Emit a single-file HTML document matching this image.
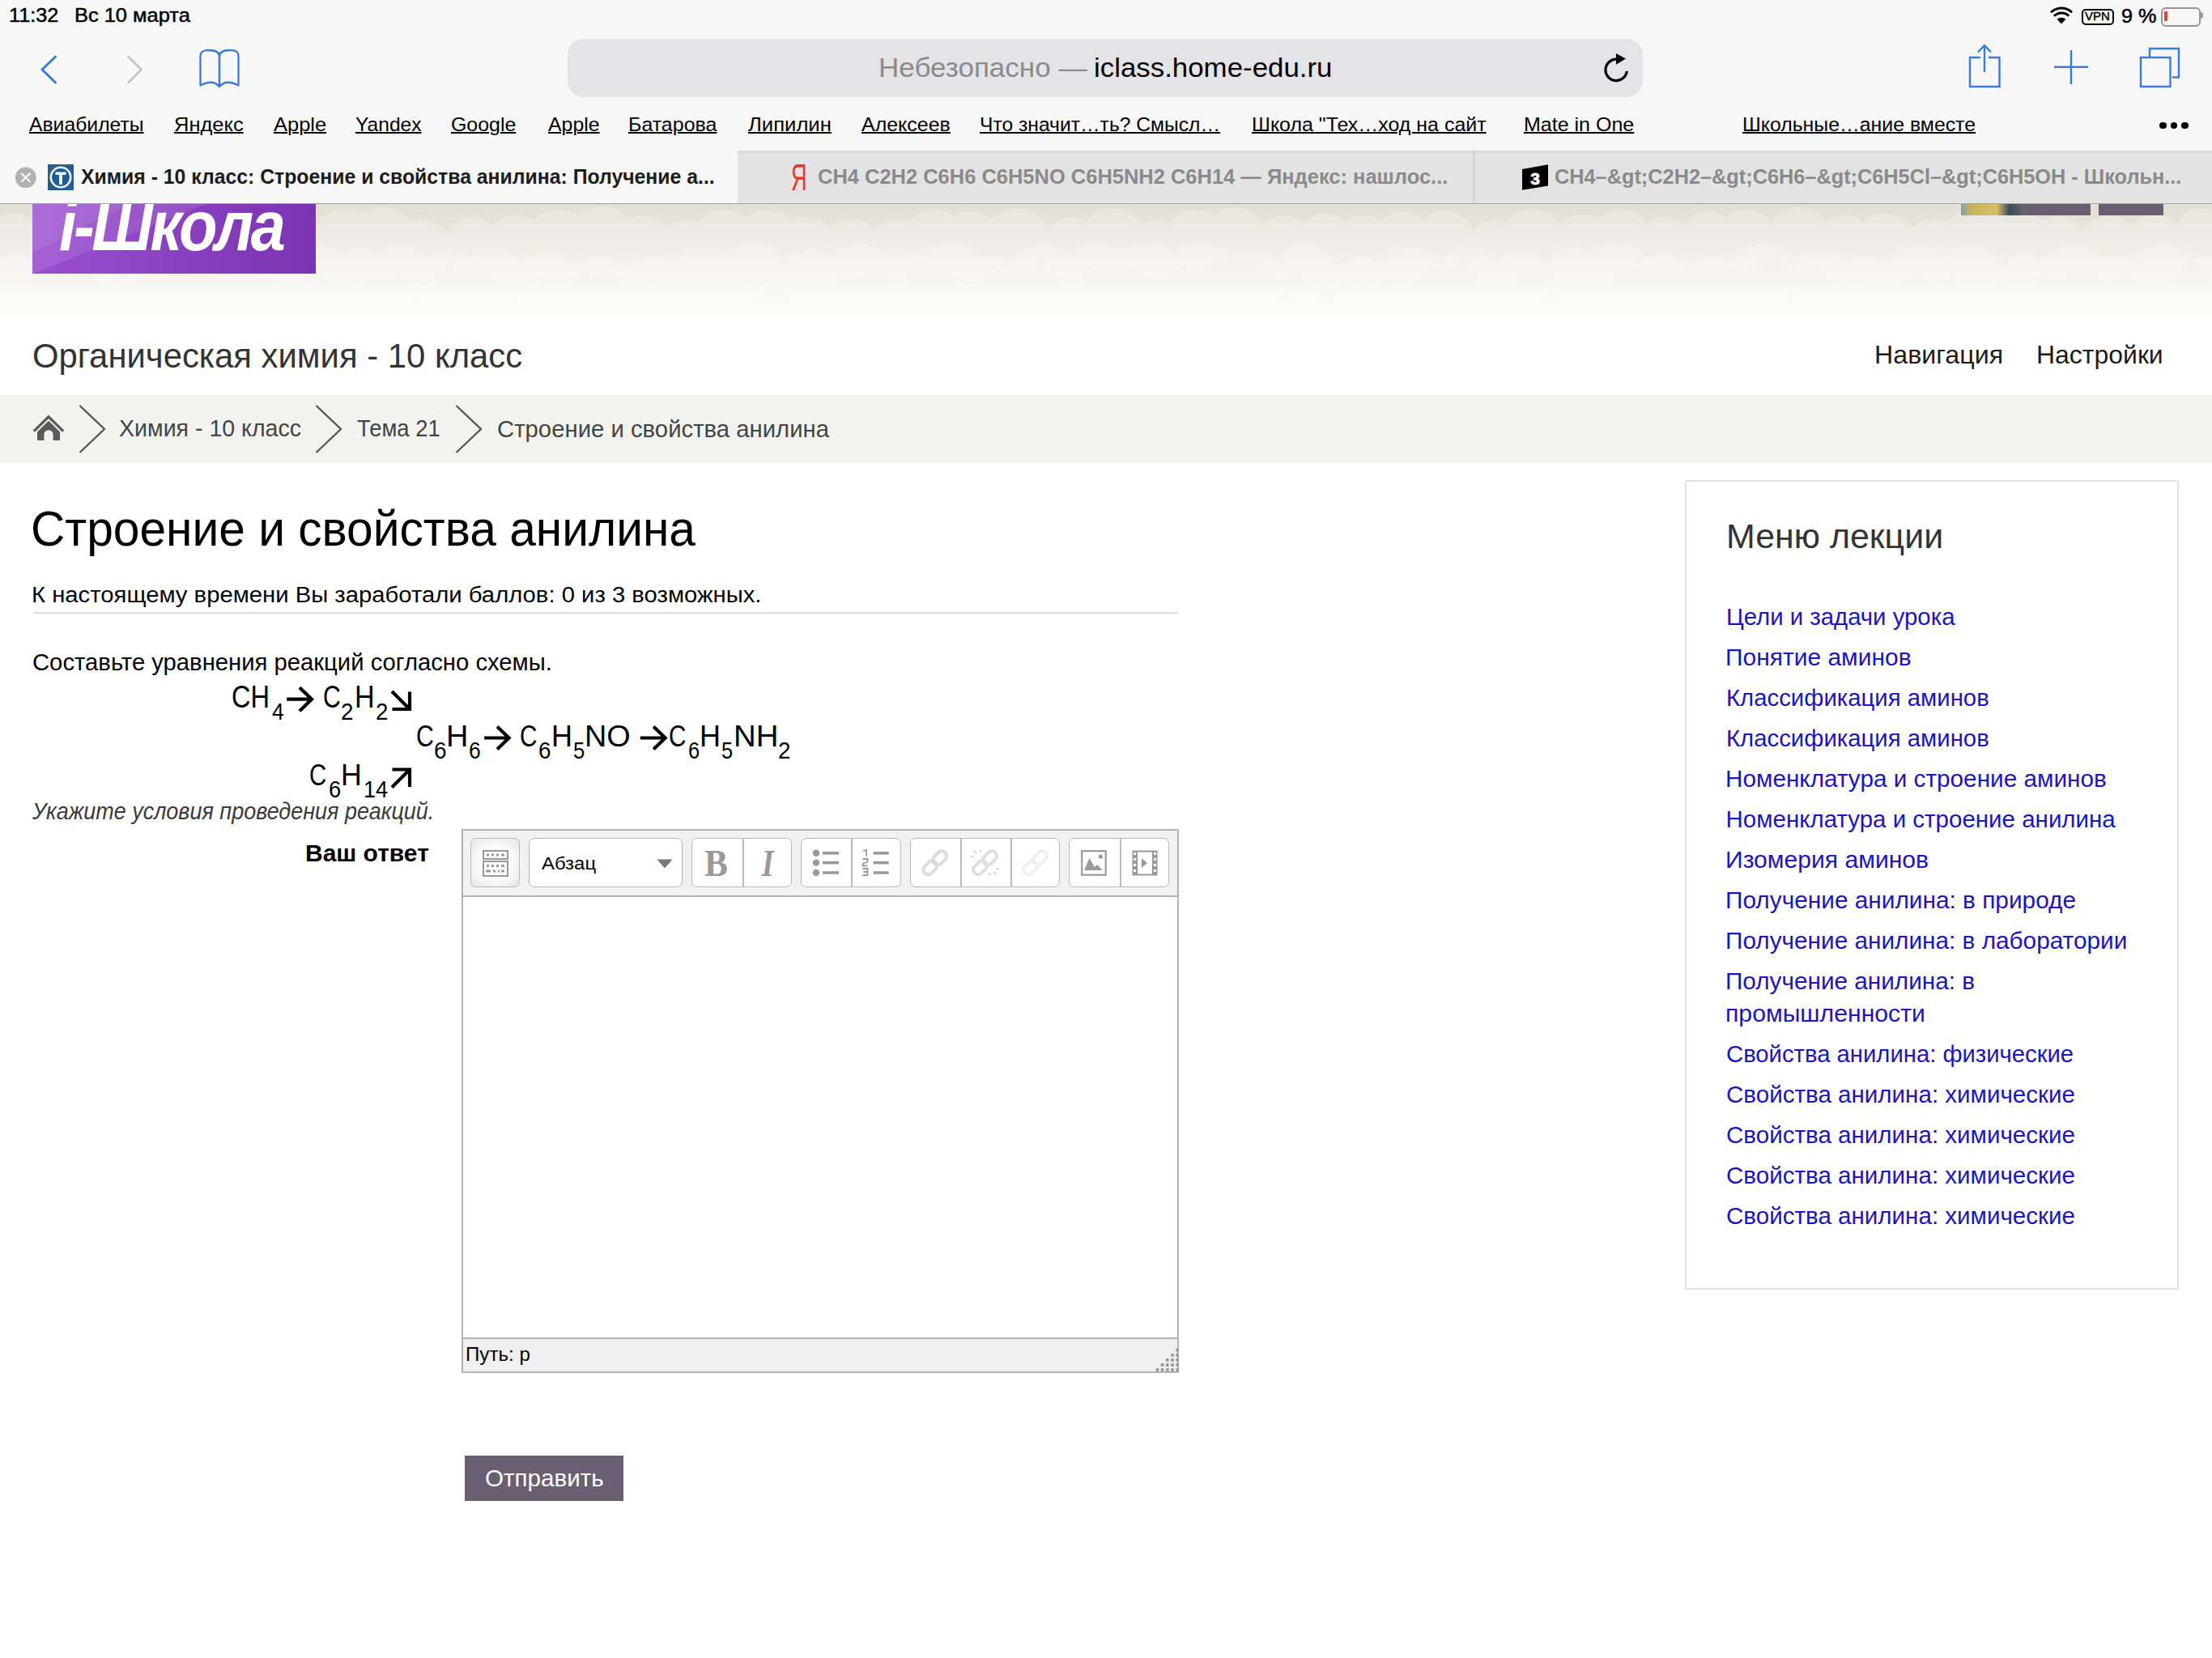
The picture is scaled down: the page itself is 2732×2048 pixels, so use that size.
<!DOCTYPE html><html><head><meta charset="utf-8"><style>
html,body{margin:0;padding:0}
body{width:2732px;height:2048px;position:relative;overflow:hidden;background:#fff;font-family:"Liberation Sans",sans-serif}
.a{position:absolute}
.t{position:absolute;white-space:pre;transform-origin:0 0}
svg{position:absolute;overflow:visible}
</style></head><body>
<div class="a" style="left:0;top:0;width:2732px;height:252px;background:#f7f7f7"></div>
<div class="a" style="left:911px;top:186px;width:1821px;height:65px;background:#e3e3e3"></div>
<div class="a" style="left:911px;top:186px;width:1821px;height:3px;background:#dadada"></div>
<div class="a" style="left:1820px;top:186px;width:1px;height:65px;background:#bdbdbd"></div>
<div class="a" style="left:0;top:251px;width:2732px;height:1px;background:#a5a29c"></div>
<div class="a" style="left:701px;top:47.5px;width:1328px;height:72px;border-radius:20px;background:#e4e4e6"></div>
<svg style="left:1975px;top:60px" width="45" height="45" viewBox="1975 60 45 45">
<path d="M2009.3 87.8 A13.2 13.2 0 1 1 1996.5 73.2" fill="none" stroke="#000" stroke-width="3.2"/>
<path d="M1996 66 L2008 72.6 L1996 79.8 Z" fill="#000"/></svg>
<svg style="left:40px;top:60px" width="40" height="50" viewBox="40 60 40 50">
<path d="M68.5 70 L52 86 L68.5 102" fill="none" stroke="#3a7bd5" stroke-width="3" stroke-linecap="round" stroke-linejoin="round"/></svg>
<svg style="left:150px;top:60px" width="40" height="50" viewBox="150 60 40 50">
<path d="M158.5 70 L174.5 86 L158.5 102" fill="none" stroke="#c4c4c8" stroke-width="2.6" stroke-linecap="round" stroke-linejoin="round"/></svg>
<svg style="left:240px;top:55px" width="62" height="60" viewBox="240 55 62 60">
<path d="M271 107 C266 101 258 100 247.5 105.5 L247.5 69 C247.5 63 252 62 258 62 C265 62 271 64 271 70 Z" fill="none" stroke="#3a7bd5" stroke-width="2.3" stroke-linejoin="round"/>
<path d="M271 107 C276 101 284 100 294.5 105.5 L294.5 69 C294.5 63 290 62 284 62 C277 62 271 64 271 70 Z" fill="none" stroke="#3a7bd5" stroke-width="2.3" stroke-linejoin="round"/>
</svg>
<svg style="left:2425px;top:50px" width="55" height="65" viewBox="2425 50 55 65">
<path d="M2446 71 L2433 71 L2433 107 L2469.5 107 L2469.5 71 L2456 71" fill="none" stroke="#3a7bd5" stroke-width="2.4"/>
<path d="M2451 89 L2451 56.5" fill="none" stroke="#3a7bd5" stroke-width="2.4"/>
<path d="M2443 64.5 L2451 56 L2459 64.5" fill="none" stroke="#3a7bd5" stroke-width="2.4"/></svg>
<svg style="left:2530px;top:55px" width="55" height="55" viewBox="2530 55 55 55">
<path d="M2558 62 L2558 104 M2537 82.8 L2579 82.8" fill="none" stroke="#3a7bd5" stroke-width="2.4"/></svg>
<svg style="left:2635px;top:52px" width="65" height="62" viewBox="2635 52 65 62">
<rect x="2644" y="71" width="36.5" height="36" fill="none" stroke="#3a7bd5" stroke-width="2.4"/>
<path d="M2655 70 L2655 60 L2691 60 L2691 95.5 L2683 95.5" fill="none" stroke="#3a7bd5" stroke-width="2.4"/></svg>
<svg style="left:2528px;top:6px" width="36" height="28" viewBox="2528 6 36 28">
<path d="M2546 29.5 L2540.6 23.8 A7.8 7.8 0 0 1 2551.4 23.8 Z" fill="#000"/>
<path d="M2536.8 19.8 A13.2 13.2 0 0 1 2555.2 19.8" fill="none" stroke="#000" stroke-width="2.9"/>
<path d="M2533 15.2 A19 19 0 0 1 2559 15.2" fill="none" stroke="#000" stroke-width="2.9"/></svg>
<div class="a" style="left:2570.5px;top:10.5px;width:36px;height:16px;border:2px solid #000;border-radius:5px"></div>
<div class="a" style="left:2669px;top:8.5px;width:45px;height:20px;border:2px solid #959595;border-radius:6px"></div>
<div class="a" style="left:2673px;top:13.5px;width:4px;height:12.5px;background:#e0453a;border-radius:1px"></div>
<div class="a" style="left:2717px;top:15px;width:3.5px;height:8px;background:#9a9a9a;border-radius:0 3px 3px 0"></div>
<div class="a" style="left:2667.3px;top:151px;width:8.4px;height:8.4px;border-radius:50%;background:#000"></div>
<div class="a" style="left:2680.8px;top:151px;width:8.4px;height:8.4px;border-radius:50%;background:#000"></div>
<div class="a" style="left:2694.3px;top:151px;width:8.4px;height:8.4px;border-radius:50%;background:#000"></div>
<svg style="left:15px;top:200px" width="35" height="38" viewBox="15 200 35 38">
<circle cx="31.8" cy="219.3" r="12.9" fill="#b1b1b1"/>
<path d="M26.2 213.7 L37.4 224.9 M37.4 213.7 L26.2 224.9" stroke="#fff" stroke-width="2"/></svg>
<svg style="left:59px;top:203px" width="32" height="32" viewBox="0 0 32 32">
<rect x="0" y="0" width="32" height="32" fill="#2a5d8f"/>
<circle cx="16" cy="16" r="12.2" fill="#1f5a90" stroke="#eaf6ff" stroke-width="2.6"/>
<path d="M9.5 9.5 L22.5 9.5 L22.5 13 L18 13 L18 25 L14 25 L14 13 L9.5 13 Z" fill="#eaf6ff"/></svg>
<svg style="left:1879px;top:202px" width="34" height="34" viewBox="1879 202 34 34">
<path d="M1880 209 L1912 203.2 L1912 229.5 L1880 234.7 Z" fill="#000"/>
<text x="1896" y="227.5" font-family="Liberation Sans" font-weight="700" font-size="21" fill="#fff" stroke="#fff" stroke-width="0.8" text-anchor="middle">3</text></svg>
<div class="a" style="left:0;top:252px;width:2732px;height:236px;background:linear-gradient(to bottom,#e2dfd3 0px,#e6e4d9 30px,#eceae2 60px,#f3f2ed 90px,#f9f9f6 115px,#fdfdfc 135px,#fff 155px)"></div>
<svg style="left:0;top:0" width="2732" height="488" viewBox="0 0 2732 488"><defs><clipPath id="hc"><rect x="0" y="252" width="2732" height="236"/></clipPath></defs><g clip-path="url(#hc)"><g fill="#ffffff" opacity="0.24"><circle cx="-40" cy="312.7" r="43"/><circle cx="19" cy="306.6" r="43"/><circle cx="82" cy="297.1" r="39"/><circle cx="143" cy="308.7" r="43"/><circle cx="193" cy="299.6" r="37"/><circle cx="242" cy="301.2" r="37"/><circle cx="307" cy="301.1" r="36"/><circle cx="364" cy="309.1" r="43"/><circle cx="428" cy="303.7" r="46"/><circle cx="473" cy="300.1" r="44"/><circle cx="519" cy="309.0" r="39"/><circle cx="583" cy="304.2" r="36"/><circle cx="638" cy="308.0" r="43"/><circle cx="689" cy="303.0" r="44"/><circle cx="743" cy="298.1" r="43"/><circle cx="790" cy="309.1" r="43"/><circle cx="848" cy="315.9" r="44"/><circle cx="895" cy="306.3" r="47"/><circle cx="947" cy="303.9" r="44"/><circle cx="994" cy="313.0" r="45"/><circle cx="1051" cy="306.4" r="37"/><circle cx="1108" cy="308.3" r="37"/><circle cx="1153" cy="297.6" r="39"/><circle cx="1199" cy="304.4" r="43"/><circle cx="1256" cy="298.2" r="42"/><circle cx="1321" cy="307.2" r="39"/><circle cx="1374" cy="297.5" r="41"/><circle cx="1429" cy="307.4" r="36"/><circle cx="1477" cy="297.2" r="38"/><circle cx="1525" cy="292.0" r="36"/><circle cx="1585" cy="304.6" r="38"/><circle cx="1636" cy="306.7" r="43"/><circle cx="1685" cy="307.9" r="42"/><circle cx="1733" cy="304.2" r="42"/><circle cx="1784" cy="295.6" r="36"/><circle cx="1847" cy="312.0" r="40"/><circle cx="1892" cy="297.2" r="39"/><circle cx="1956" cy="310.8" r="46"/><circle cx="2002" cy="296.6" r="38"/><circle cx="2055" cy="304.1" r="36"/><circle cx="2110" cy="301.6" r="40"/><circle cx="2157" cy="295.5" r="37"/><circle cx="2222" cy="294.3" r="39"/><circle cx="2278" cy="306.6" r="41"/><circle cx="2327" cy="308.2" r="45"/><circle cx="2390" cy="307.7" r="38"/><circle cx="2440" cy="303.6" r="46"/><circle cx="2492" cy="304.2" r="45"/><circle cx="2543" cy="305.6" r="38"/><circle cx="2605" cy="305.7" r="39"/><circle cx="2662" cy="308.3" r="43"/><circle cx="2720" cy="292.8" r="36"/><circle cx="2766" cy="315.4" r="44"/></g><g fill="#ffffff" opacity="0.24"><circle cx="-40" cy="359.1" r="47"/><circle cx="18" cy="356.5" r="42"/><circle cx="87" cy="346.9" r="43"/><circle cx="142" cy="362.4" r="50"/><circle cx="194" cy="340.6" r="38"/><circle cx="261" cy="361.0" r="46"/><circle cx="330" cy="340.6" r="37"/><circle cx="386" cy="345.3" r="47"/><circle cx="444" cy="348.9" r="42"/><circle cx="495" cy="337.5" r="36"/><circle cx="556" cy="353.4" r="44"/><circle cx="610" cy="342.2" r="37"/><circle cx="674" cy="352.1" r="41"/><circle cx="740" cy="361.9" r="45"/><circle cx="808" cy="352.5" r="36"/><circle cx="873" cy="355.1" r="50"/><circle cx="932" cy="334.4" r="36"/><circle cx="1002" cy="344.6" r="37"/><circle cx="1061" cy="341.7" r="41"/><circle cx="1113" cy="344.1" r="37"/><circle cx="1174" cy="345.9" r="47"/><circle cx="1228" cy="365.3" r="48"/><circle cx="1288" cy="340.7" r="41"/><circle cx="1353" cy="349.6" r="50"/><circle cx="1416" cy="346.6" r="48"/><circle cx="1481" cy="343.3" r="45"/><circle cx="1543" cy="351.7" r="42"/><circle cx="1612" cy="336.6" r="37"/><circle cx="1682" cy="354.9" r="37"/><circle cx="1745" cy="351.6" r="47"/><circle cx="1813" cy="349.8" r="43"/><circle cx="1880" cy="345.4" r="37"/><circle cx="1946" cy="340.2" r="36"/><circle cx="1998" cy="341.4" r="43"/><circle cx="2051" cy="356.6" r="43"/><circle cx="2116" cy="355.9" r="40"/><circle cx="2177" cy="340.9" r="40"/><circle cx="2246" cy="347.4" r="39"/><circle cx="2306" cy="362.6" r="46"/><circle cx="2371" cy="352.8" r="50"/><circle cx="2433" cy="349.0" r="46"/><circle cx="2503" cy="356.1" r="42"/><circle cx="2559" cy="352.3" r="50"/><circle cx="2616" cy="361.4" r="45"/><circle cx="2672" cy="338.7" r="38"/><circle cx="2733" cy="364.9" r="49"/><circle cx="2784" cy="346.3" r="47"/></g></g></svg>
<svg style="left:40px;top:252px" width="350" height="86" viewBox="0 0 350 86">
<defs><linearGradient id="lg" x1="0" y1="0" x2="1" y2="0"><stop offset="0" stop-color="#9b4fd0"/><stop offset="1" stop-color="#7a33b2"/></linearGradient></defs>
<rect width="350" height="86" fill="url(#lg)"/>
<path d="M0 0 L215 0 L0 86 Z" fill="#ffffff" fill-opacity="0.10"/>
<path d="M0 0 L120 0 L0 60 Z" fill="#ffffff" fill-opacity="0.08"/>
</svg>
<div class="a" style="left:40px;top:252px;width:350px;height:86px;overflow:hidden"><div class="t" style="left:33px;top:26.5px;font:italic 700 88px/0 'Liberation Sans',sans-serif;color:#fff;transform:scaleX(0.88);letter-spacing:-4px">i-Школа</div></div>
<svg style="left:2422px;top:252px" width="250" height="14" viewBox="0 0 250 14">
<defs><linearGradient id="ig" x1="0" x2="1"><stop offset="0" stop-color="#7fa0b0"/><stop offset="0.15" stop-color="#c9b25a"/><stop offset="0.55" stop-color="#d8c064"/><stop offset="0.75" stop-color="#3b4a5a"/><stop offset="1" stop-color="#6d6a6a"/></linearGradient></defs>
<rect x="0" y="0" width="80" height="14" fill="url(#ig)"/>
<rect x="80" y="0" width="80" height="14" fill="#6b5e73"/>
<rect x="170" y="0" width="80" height="14" fill="#6b5e73"/></svg>
<div class="a" style="left:0;top:488px;width:2732px;height:83.5px;background:#f2f2ee"></div>
<svg style="left:38px;top:508px" width="45" height="40" viewBox="38 508 45 40">
<path d="M41.8 532.6 L60 514.8 L78.2 532.6" fill="none" stroke="#5a5a5a" stroke-width="3.3" stroke-linejoin="miter"/>
<path d="M46 533.5 L60 519.8 L74 533.5 L74 544 L65.6 544 L65.6 536.8 A5.6 5.6 0 0 0 54.4 536.8 L54.4 544 L46 544 Z" fill="#5a5a5a"/></svg>
<svg style="left:96px;top:498px" width="40" height="64" viewBox="96 498 40 64">
<path d="M98.5 501 L129 530 L98.5 559" fill="none" stroke="#555" stroke-width="2.3"/></svg>
<svg style="left:388px;top:498px" width="40" height="64" viewBox="388 498 40 64">
<path d="M390.5 501 L421 530 L390.5 559" fill="none" stroke="#555" stroke-width="2.3"/></svg>
<svg style="left:561px;top:498px" width="40" height="64" viewBox="561 498 40 64">
<path d="M563.5 501 L594 530 L563.5 559" fill="none" stroke="#555" stroke-width="2.3"/></svg>
<div class="a" style="left:41px;top:756px;width:1414px;height:2px;background:#dcdcdc"></div>
<svg style="left:0;top:0" width="1100" height="1000" viewBox="0 0 1100 1000"><path d="M354.2 863.7 L385 863.7 M370.0 849.2 L385 863.7 L370.0 878.2" fill="none" stroke="#000" stroke-width="4.2" stroke-linejoin="miter" stroke-linecap="butt"/><path d="M598.2 911.5 L628.6 911.5 M614.1 897.5 L628.6 911.5 L614.1 925.5" fill="none" stroke="#000" stroke-width="4.2" stroke-linejoin="miter" stroke-linecap="butt"/><path d="M790.8 911.5 L821.7 911.5 M807.2 897.5 L821.7 911.5 L807.2 925.5" fill="none" stroke="#000" stroke-width="4.2" stroke-linejoin="miter" stroke-linecap="butt"/><path d="M484 854 L506 876 M506 854.5 L506 876 L484.5 876" fill="none" stroke="#000" stroke-width="4.2"/><path d="M484 972.5 L506 950.5 M484.5 950.5 L506 950.5 L506 972" fill="none" stroke="#000" stroke-width="4.2"/></svg>
<div class="a" style="left:570px;top:1024px;width:886px;height:672px;box-sizing:border-box;border:2px solid #b3b3b3;background:#fff"></div>
<div class="a" style="left:572px;top:1026px;width:882px;height:81.5px;box-sizing:border-box;background:#f1f1f1;border-bottom:2px solid #b3b3b3"></div>
<div class="a" style="left:572px;top:1652px;width:882px;height:42px;box-sizing:border-box;background:#f0f0f0;border-top:2px solid #b3b3b3"></div>
<div class="a" style="left:581px;top:1034.5px;width:59.1px;height:59.6px;border:1.7px solid #b9b9b9;border-radius:7px;background:radial-gradient(circle at 50% 50%,#fff 40%,#e6e6e6 100%)"></div>
<div class="a" style="left:653.3px;top:1034.5px;width:187.80000000000004px;height:59.6px;border:1.7px solid #b9b9b9;border-radius:7px;background:#fff"></div>
<div class="a" style="left:853.7px;top:1034.5px;width:121.89999999999995px;height:59.6px;border:1.7px solid #b9b9b9;border-radius:7px;background:#fff"></div><div class="a" style="left:917px;top:1036px;width:1.6px;height:60px;background:#b9b9b9"></div>
<div class="a" style="left:989px;top:1034.5px;width:121.6px;height:59.6px;border:1.7px solid #b9b9b9;border-radius:7px;background:#fff"></div><div class="a" style="left:1051px;top:1036px;width:1.6px;height:60px;background:#b9b9b9"></div>
<div class="a" style="left:1124px;top:1034.5px;width:182.6px;height:59.6px;border:1.7px solid #b9b9b9;border-radius:7px;background:#fff"></div><div class="a" style="left:1186px;top:1036px;width:1.6px;height:60px;background:#b9b9b9"></div><div class="a" style="left:1248px;top:1036px;width:1.6px;height:60px;background:#b9b9b9"></div>
<div class="a" style="left:1319.6px;top:1034.5px;width:122.00000000000009px;height:59.6px;border:1.7px solid #b9b9b9;border-radius:7px;background:#fff"></div><div class="a" style="left:1383px;top:1036px;width:1.6px;height:60px;background:#b9b9b9"></div>
<svg style="left:596px;top:1049.5px" width="32" height="33" viewBox="0 0 32 33">
<rect x="1" y="1" width="30" height="10" fill="none" stroke="#999" stroke-width="2"/>
<rect x="1" y="14" width="30" height="18" fill="none" stroke="#999" stroke-width="2"/>
<g fill="#999"><rect x="5" y="4.5" width="3" height="3"/><rect x="11" y="4.5" width="3" height="3"/><rect x="17" y="4.5" width="3" height="3"/><rect x="23" y="4.5" width="4" height="3"/>
<rect x="5" y="18" width="3" height="3"/><rect x="11" y="18" width="3" height="3"/><rect x="17" y="18" width="3" height="3"/><rect x="23" y="18" width="4" height="3"/>
<rect x="4" y="24.5" width="6" height="3"/><rect x="13" y="24.5" width="3" height="3"/><rect x="19" y="24.5" width="2" height="3"/><rect x="23" y="24.5" width="4" height="3"/></g></svg>
<svg style="left:811px;top:1061px" width="20" height="12" viewBox="0 0 20 12"><path d="M0.5 0.5 L19.5 0.5 L10 11.5 Z" fill="#777"/></svg>
<div class="t" style="left:869.8px;top:1065.7px;font:700 47px/0 'Liberation Serif',serif;color:#999;transform:scaleX(0.92)">B</div>
<div class="t" style="left:941px;top:1065.7px;font:italic 700 47px/0 'Liberation Serif',serif;color:#999;transform:scaleX(0.8)">I</div>
<svg style="left:1000px;top:1045px" width="40" height="40" viewBox="1000 1045 40 40"><g fill="#999">
<circle cx="1008" cy="1053.8" r="4.2"/><circle cx="1008" cy="1065.6" r="4.2"/><circle cx="1008" cy="1078" r="4.2"/>
<rect x="1016" y="1052" width="20" height="3.6"/><rect x="1016" y="1063.8" width="20" height="3.6"/><rect x="1016" y="1076.2" width="20" height="3.6"/></g></svg>
<svg style="left:1060px;top:1045px" width="40" height="40" viewBox="1060 1045 40 40"><g fill="#999">
<rect x="1078.7" y="1052" width="19" height="3.6"/><rect x="1078.7" y="1063.8" width="19" height="3.6"/><rect x="1078.7" y="1076.2" width="19" height="3.6"/></g>
<g fill="none" stroke="#999" stroke-width="1.8"><path d="M1066 1051 L1070 1050 L1070 1057.5"/><path d="M1065.5 1061 L1071.5 1061 L1071.5 1064.5 L1065.5 1067 L1065.5 1069.5 L1071.5 1069.5"/><path d="M1065.5 1073 L1071.5 1073 L1071.5 1081 L1065.5 1081 M1066.5 1077 L1071.5 1077"/></g></svg>
<svg style="left:0;top:0" width="1460" height="1100" viewBox="0 0 1460 1100"><g transform="translate(1154.7 1065.8) rotate(-45)" fill="none" stroke="#dcdcdc" stroke-width="4"><rect x="-18" y="-6" width="19" height="12" rx="6"/><rect x="-1" y="-6" width="19" height="12" rx="6"/></g><g transform="translate(1216.5 1065.8) rotate(-45)" fill="none" stroke="#dedede" stroke-width="4"><rect x="-18" y="-6" width="19" height="12" rx="6"/><rect x="-1" y="-6" width="19" height="12" rx="6"/></g><g stroke="#dedede" stroke-width="2.5"><path d="M1202 1050 L1206 1054 M1211 1049 L1211 1053 M1199 1058 L1203 1058 M1231 1081 L1227 1077 M1222 1082 L1222 1078 M1234 1073 L1230 1073"/></g><g transform="translate(1278.5 1065.8) rotate(-45)" fill="none" stroke="#f0f0f0" stroke-width="4"><rect x="-18" y="-6" width="19" height="12" rx="6"/><rect x="-1" y="-6" width="19" height="12" rx="6"/></g></svg>
<svg style="left:1335px;top:1050px" width="33" height="33" viewBox="0 0 33 33">
<rect x="1.2" y="1.2" width="29.5" height="29.5" fill="none" stroke="#999" stroke-width="2.2"/>
<path d="M4 25 L10.5 10 L17 21 L20 18 L27 25 Z" fill="#999"/><circle cx="24.5" cy="8" r="2.6" fill="#999"/></svg>
<svg style="left:1398px;top:1050px" width="33" height="33" viewBox="0 0 33 33">
<rect x="0.5" y="0.5" width="31" height="31" fill="#999"/>
<rect x="7" y="2.5" width="18" height="27" fill="#fff"/>
<g fill="#fff"><rect x="2" y="3" width="3" height="3"/><rect x="2" y="10" width="3" height="3"/><rect x="2" y="17" width="3" height="3"/><rect x="2" y="24" width="3" height="3"/>
<rect x="27" y="3" width="3" height="3"/><rect x="27" y="10" width="3" height="3"/><rect x="27" y="17" width="3" height="3"/><rect x="27" y="24" width="3" height="3"/></g>
<path d="M12 10 L19 16 L12 22 Z" fill="#999"/></svg>
<svg style="left:0;top:0" width="1460" height="1700" viewBox="0 0 1460 1700"><g fill="#999"><rect x="1452.4" y="1665.8" width="3.6" height="3.8"/><rect x="1446.2" y="1671.9" width="3.6" height="3.8"/><rect x="1452.4" y="1671.9" width="3.6" height="3.8"/><rect x="1440.0" y="1678.0" width="3.6" height="3.8"/><rect x="1446.2" y="1678.0" width="3.6" height="3.8"/><rect x="1452.4" y="1678.0" width="3.6" height="3.8"/><rect x="1433.8" y="1684.1" width="3.6" height="3.8"/><rect x="1440.0" y="1684.1" width="3.6" height="3.8"/><rect x="1446.2" y="1684.1" width="3.6" height="3.8"/><rect x="1452.4" y="1684.1" width="3.6" height="3.8"/><rect x="1427.6" y="1690.2" width="3.6" height="3.8"/><rect x="1433.8" y="1690.2" width="3.6" height="3.8"/><rect x="1440.0" y="1690.2" width="3.6" height="3.8"/><rect x="1446.2" y="1690.2" width="3.6" height="3.8"/><rect x="1452.4" y="1690.2" width="3.6" height="3.8"/></g></svg>
<div class="a" style="left:574px;top:1798px;width:196px;height:56px;background:#6a5f72"></div>
<div class="a" style="left:2081px;top:593px;width:606px;height:996px;border:2px solid #e3e3e3;background:#fff"></div>
<div class="t" style="left:10.65px;top:19.44px;font:normal 400 24.71px/0 'Liberation Sans',sans-serif;color:#000;transform:scaleX(1.0228);-webkit-text-stroke:0.5px #000;">11:32</div>
<div class="t" style="left:91.94px;top:19.44px;font:normal 400 24.71px/0 'Liberation Sans',sans-serif;color:#000;transform:scaleX(1.0292);-webkit-text-stroke:0.5px #000;">Вс 10 марта</div>
<div class="t" style="left:2619.94px;top:19.59px;font:normal 400 23.69px/0 'Liberation Sans',sans-serif;color:#000;transform:scaleX(1.0641);-webkit-text-stroke:0.5px #000;">9 %</div>
<div class="t" style="left:1084.90px;top:84.12px;font:normal 400 33.43px/0 'Liberation Sans',sans-serif;color:#8a8a8e;transform:scaleX(1.0480);">Небезопасно —</div>
<div class="t" style="left:1350.91px;top:84.12px;font:normal 400 33.43px/0 'Liberation Sans',sans-serif;color:#000;transform:scaleX(1.0430);">iclass.home-edu.ru</div>
<div class="t" style="left:2575.40px;top:20.06px;font:normal 400 14.83px/0 'Liberation Sans',sans-serif;color:#000;transform:scaleX(1.0067);-webkit-text-stroke:0.45px #000;">VPN</div>
<div class="t" style="left:976.83px;top:218.88px;font:normal 400 46.51px/0 'Liberation Sans',sans-serif;color:#e23b26;transform:scaleX(0.5857);">Я</div>
<div class="t" style="left:36.40px;top:153.89px;font:normal 400 24.27px/0 'Liberation Sans',sans-serif;color:#000;transform:scaleX(1.0188);text-decoration:underline;text-decoration-thickness:2px;text-underline-offset:1px;">Авиабилеты</div>
<div class="t" style="left:214.95px;top:153.89px;font:normal 400 24.27px/0 'Liberation Sans',sans-serif;color:#000;transform:scaleX(1.0500);text-decoration:underline;text-decoration-thickness:2px;text-underline-offset:1px;">Яндекс</div>
<div class="t" style="left:338.00px;top:153.89px;font:normal 400 24.27px/0 'Liberation Sans',sans-serif;color:#000;transform:scaleX(1.0492);text-decoration:underline;text-decoration-thickness:2px;text-underline-offset:1px;">Apple</div>
<div class="t" style="left:438.99px;top:153.89px;font:normal 400 24.27px/0 'Liberation Sans',sans-serif;color:#000;transform:scaleX(1.0127);text-decoration:underline;text-decoration-thickness:2px;text-underline-offset:1px;">Yandex</div>
<div class="t" style="left:556.97px;top:153.89px;font:normal 400 24.27px/0 'Liberation Sans',sans-serif;color:#000;transform:scaleX(1.0260);text-decoration:underline;text-decoration-thickness:2px;text-underline-offset:1px;">Google</div>
<div class="t" style="left:676.50px;top:153.89px;font:normal 400 24.27px/0 'Liberation Sans',sans-serif;color:#000;transform:scaleX(1.0246);text-decoration:underline;text-decoration-thickness:2px;text-underline-offset:1px;">Apple</div>
<div class="t" style="left:775.94px;top:153.89px;font:normal 400 24.27px/0 'Liberation Sans',sans-serif;color:#000;transform:scaleX(1.0286);text-decoration:underline;text-decoration-thickness:2px;text-underline-offset:1px;">Батарова</div>
<div class="t" style="left:924.00px;top:153.89px;font:normal 400 24.27px/0 'Liberation Sans',sans-serif;color:#000;transform:scaleX(1.0573);text-decoration:underline;text-decoration-thickness:2px;text-underline-offset:1px;">Липилин</div>
<div class="t" style="left:1064.00px;top:153.89px;font:normal 400 24.27px/0 'Liberation Sans',sans-serif;color:#000;transform:scaleX(1.0283);text-decoration:underline;text-decoration-thickness:2px;text-underline-offset:1px;">Алексеев</div>
<div class="t" style="left:1209.97px;top:153.89px;font:normal 400 24.27px/0 'Liberation Sans',sans-serif;color:#000;transform:scaleX(1.0156);text-decoration:underline;text-decoration-thickness:2px;text-underline-offset:1px;">Что значит…ть? Смысл…</div>
<div class="t" style="left:1545.94px;top:153.89px;font:normal 400 24.27px/0 'Liberation Sans',sans-serif;color:#000;transform:scaleX(1.0286);text-decoration:underline;text-decoration-thickness:2px;text-underline-offset:1px;">Школа "Тех…ход на сайт</div>
<div class="t" style="left:1881.94px;top:153.89px;font:normal 400 24.27px/0 'Liberation Sans',sans-serif;color:#000;transform:scaleX(1.0308);text-decoration:underline;text-decoration-thickness:2px;text-underline-offset:1px;">Mate in One</div>
<div class="t" style="left:2152.45px;top:153.89px;font:normal 400 24.27px/0 'Liberation Sans',sans-serif;color:#000;transform:scaleX(1.0233);text-decoration:underline;text-decoration-thickness:2px;text-underline-offset:1px;">Школьные…ание вместе</div>
<div class="t" style="left:99.70px;top:217.69px;font:normal 700 25.44px/0 'Liberation Sans',sans-serif;color:#1c1c1c;transform:scaleX(0.9742);">Химия - 10 класс: Строение и свойства анилина: Получение а...</div>
<div class="t" style="left:1010.00px;top:217.69px;font:normal 700 25.44px/0 'Liberation Sans',sans-serif;color:#8a8a8a;transform:scaleX(1.0013);">CH4 C2H2 C6H6 C6H5NO C6H5NH2 C6H14 — Яндекс: нашлос...</div>
<div class="t" style="left:1920.01px;top:217.69px;font:normal 700 25.44px/0 'Liberation Sans',sans-serif;color:#8a8a8a;transform:scaleX(0.9948);">CH4–&amp;gt;C2H2–&amp;gt;C6H6–&amp;gt;C6H5Cl–&amp;gt;C6H5OH - Школьн...</div>
<div class="t" style="left:39.54px;top:439.19px;font:normal 400 42.73px/0 'Liberation Sans',sans-serif;color:#333;transform:scaleX(0.9790);">Органическая химия - 10 класс</div>
<div class="t" style="left:2315.34px;top:438.87px;font:normal 400 31.25px/0 'Liberation Sans',sans-serif;color:#1e1a17;transform:scaleX(1.0305);">Навигация</div>
<div class="t" style="left:2514.55px;top:438.87px;font:normal 400 31.25px/0 'Liberation Sans',sans-serif;color:#1e1a17;transform:scaleX(1.0228);">Настройки</div>
<div class="t" style="left:147.03px;top:529.48px;font:normal 400 29.51px/0 'Liberation Sans',sans-serif;color:#444;transform:scaleX(0.9680);">Химия - 10 класс</div>
<div class="t" style="left:440.70px;top:529.48px;font:normal 400 29.51px/0 'Liberation Sans',sans-serif;color:#444;transform:scaleX(0.9294);">Тема 21</div>
<div class="t" style="left:614.42px;top:530.23px;font:normal 400 29.94px/0 'Liberation Sans',sans-serif;color:#444;transform:scaleX(0.9787);">Строение и свойства анилина</div>
<div class="t" style="left:38.27px;top:653.55px;font:normal 400 60.17px/0 'Liberation Sans',sans-serif;color:#000;transform:scaleX(0.9752);">Строение и свойства анилина</div>
<div class="t" style="left:38.89px;top:734.88px;font:normal 400 27.76px/0 'Liberation Sans',sans-serif;color:#000;transform:scaleX(1.0541);">К настоящему времени Вы заработали баллов: 0 из 3 возможных.</div>
<div class="t" style="left:39.99px;top:818.23px;font:normal 400 29.07px/0 'Liberation Sans',sans-serif;color:#000;transform:scaleX(1.0063);">Составьте уравнения реакций согласно схемы.</div>
<div class="t" style="left:40.30px;top:1002.33px;font:italic 400 29.07px/0 'Liberation Sans',sans-serif;color:#3a3a3a;transform:scaleX(0.9280);">Укажите условия проведения реакций.</div>
<div class="t" style="left:376.92px;top:1053.83px;font:normal 700 28.78px/0 'Liberation Sans',sans-serif;color:#000;transform:scaleX(1.0417);">Ваш ответ</div>
<div class="t" style="left:668.50px;top:1066.14px;font:normal 400 22.67px/0 'Liberation Sans',sans-serif;color:#000;transform:scaleX(1.0556);">Абзац</div>
<div class="t" style="left:575.44px;top:1673.19px;font:normal 400 24.56px/0 'Liberation Sans',sans-serif;color:#000;transform:scaleX(0.9823);">Путь: р</div>
<div class="t" style="left:598.59px;top:1825.78px;font:normal 400 29.22px/0 'Liberation Sans',sans-serif;color:#fff;transform:scaleX(1.0126);">Отправить</div>
<div class="t" style="left:2131.56px;top:663.44px;font:normal 400 42.30px/0 'Liberation Sans',sans-serif;color:#333;transform:scaleX(1.0147);">Меню лекции</div>
<div class="t" style="left:2131.51px;top:761.78px;font:normal 400 29.51px/0 'Liberation Sans',sans-serif;color:#1d14c0;transform:scaleX(0.9947);">Цели и задачи урока</div>
<div class="t" style="left:2131.47px;top:811.78px;font:normal 400 29.51px/0 'Liberation Sans',sans-serif;color:#1d14c0;transform:scaleX(1.0157);">Понятие аминов</div>
<div class="t" style="left:2131.51px;top:861.78px;font:normal 400 29.51px/0 'Liberation Sans',sans-serif;color:#1d14c0;transform:scaleX(0.9944);">Классификация аминов</div>
<div class="t" style="left:2131.51px;top:911.78px;font:normal 400 29.51px/0 'Liberation Sans',sans-serif;color:#1d14c0;transform:scaleX(0.9944);">Классификация аминов</div>
<div class="t" style="left:2131.48px;top:961.78px;font:normal 400 29.51px/0 'Liberation Sans',sans-serif;color:#1d14c0;transform:scaleX(1.0075);">Номенклатура и строение аминов</div>
<div class="t" style="left:2131.50px;top:1011.78px;font:normal 400 29.51px/0 'Liberation Sans',sans-serif;color:#1d14c0;transform:scaleX(1.0000);">Номенклатура и строение анилина</div>
<div class="t" style="left:2131.46px;top:1061.78px;font:normal 400 29.51px/0 'Liberation Sans',sans-serif;color:#1d14c0;transform:scaleX(1.0202);">Изомерия аминов</div>
<div class="t" style="left:2131.48px;top:1111.78px;font:normal 400 29.51px/0 'Liberation Sans',sans-serif;color:#1d14c0;transform:scaleX(1.0106);">Получение анилина: в природе</div>
<div class="t" style="left:2131.48px;top:1161.78px;font:normal 400 29.51px/0 'Liberation Sans',sans-serif;color:#1d14c0;transform:scaleX(1.0088);">Получение анилина: в лаборатории</div>
<div class="t" style="left:2131.48px;top:1211.78px;font:normal 400 29.51px/0 'Liberation Sans',sans-serif;color:#1d14c0;transform:scaleX(1.0076);">Получение анилина: в</div>
<div class="t" style="left:2131.45px;top:1251.78px;font:normal 400 29.51px/0 'Liberation Sans',sans-serif;color:#1d14c0;transform:scaleX(1.0231);">промышленности</div>
<div class="t" style="left:2131.61px;top:1301.78px;font:normal 400 29.51px/0 'Liberation Sans',sans-serif;color:#1d14c0;transform:scaleX(0.9916);">Свойства анилина: физические</div>
<div class="t" style="left:2131.60px;top:1351.78px;font:normal 400 29.51px/0 'Liberation Sans',sans-serif;color:#1d14c0;transform:scaleX(1.0023);">Свойства анилина: химические</div>
<div class="t" style="left:2131.60px;top:1401.78px;font:normal 400 29.51px/0 'Liberation Sans',sans-serif;color:#1d14c0;transform:scaleX(1.0023);">Свойства анилина: химические</div>
<div class="t" style="left:2131.60px;top:1451.78px;font:normal 400 29.51px/0 'Liberation Sans',sans-serif;color:#1d14c0;transform:scaleX(1.0023);">Свойства анилина: химические</div>
<div class="t" style="left:2131.60px;top:1501.78px;font:normal 400 29.51px/0 'Liberation Sans',sans-serif;color:#1d14c0;transform:scaleX(1.0023);">Свойства анилина: химические</div>
<div class="t" style="left:286.48px;top:860.66px;font:normal 400 37.94px/0 'Liberation Sans',sans-serif;color:#000;transform:scaleX(0.8580);">CH</div>
<div class="t" style="left:335.80px;top:878.83px;font:normal 400 28.78px/0 'Liberation Sans',sans-serif;color:#000;transform:scaleX(0.9187);">4</div>
<div class="t" style="left:398.61px;top:860.66px;font:normal 400 37.94px/0 'Liberation Sans',sans-serif;color:#000;transform:scaleX(0.7958);">C</div>
<div class="t" style="left:421.24px;top:878.83px;font:normal 400 28.78px/0 'Liberation Sans',sans-serif;color:#000;transform:scaleX(0.9643);">2</div>
<div class="t" style="left:437.70px;top:860.66px;font:normal 400 37.94px/0 'Liberation Sans',sans-serif;color:#000;transform:scaleX(0.9000);">H</div>
<div class="t" style="left:463.54px;top:878.83px;font:normal 400 28.78px/0 'Liberation Sans',sans-serif;color:#000;transform:scaleX(0.9643);">2</div>
<div class="t" style="left:513.77px;top:908.66px;font:normal 400 37.06px/0 'Liberation Sans',sans-serif;color:#000;transform:scaleX(0.8167);">C</div>
<div class="t" style="left:536.33px;top:926.93px;font:normal 400 28.78px/0 'Liberation Sans',sans-serif;color:#000;transform:scaleX(0.9714);">6</div>
<div class="t" style="left:551.13px;top:908.66px;font:normal 400 37.06px/0 'Liberation Sans',sans-serif;color:#000;transform:scaleX(1.0238);">H</div>
<div class="t" style="left:579.28px;top:926.93px;font:normal 400 28.78px/0 'Liberation Sans',sans-serif;color:#000;transform:scaleX(0.9214);">6</div>
<div class="t" style="left:641.90px;top:908.66px;font:normal 400 37.06px/0 'Liberation Sans',sans-serif;color:#000;transform:scaleX(0.8000);">C</div>
<div class="t" style="left:665.13px;top:926.93px;font:normal 400 28.78px/0 'Liberation Sans',sans-serif;color:#000;transform:scaleX(0.9714);">6</div>
<div class="t" style="left:681.29px;top:908.66px;font:normal 400 37.06px/0 'Liberation Sans',sans-serif;color:#000;transform:scaleX(0.9714);">H</div>
<div class="t" style="left:708.11px;top:926.93px;font:normal 400 28.78px/0 'Liberation Sans',sans-serif;color:#000;transform:scaleX(0.8929);">5</div>
<div class="t" style="left:721.84px;top:908.66px;font:normal 400 37.06px/0 'Liberation Sans',sans-serif;color:#000;transform:scaleX(1.0196);">NO</div>
<div class="t" style="left:826.20px;top:908.66px;font:normal 400 37.06px/0 'Liberation Sans',sans-serif;color:#000;transform:scaleX(0.8000);">C</div>
<div class="t" style="left:849.51px;top:926.93px;font:normal 400 28.78px/0 'Liberation Sans',sans-serif;color:#000;transform:scaleX(0.8857);">6</div>
<div class="t" style="left:864.39px;top:908.66px;font:normal 400 37.06px/0 'Liberation Sans',sans-serif;color:#000;transform:scaleX(0.9714);">H</div>
<div class="t" style="left:891.31px;top:926.93px;font:normal 400 28.78px/0 'Liberation Sans',sans-serif;color:#000;transform:scaleX(0.8857);">5</div>
<div class="t" style="left:905.99px;top:908.66px;font:normal 400 37.06px/0 'Liberation Sans',sans-serif;color:#000;transform:scaleX(1.0375);">NH</div>
<div class="t" style="left:961.34px;top:926.93px;font:normal 400 28.78px/0 'Liberation Sans',sans-serif;color:#000;transform:scaleX(0.9643);">2</div>
<div class="t" style="left:382.43px;top:956.91px;font:normal 400 37.50px/0 'Liberation Sans',sans-serif;color:#000;transform:scaleX(0.7833);">C</div>
<div class="t" style="left:405.65px;top:974.93px;font:normal 400 28.78px/0 'Liberation Sans',sans-serif;color:#000;transform:scaleX(0.9500);">6</div>
<div class="t" style="left:421.34px;top:956.91px;font:normal 400 37.50px/0 'Liberation Sans',sans-serif;color:#000;transform:scaleX(0.9524);">H</div>
<div class="t" style="left:448.52px;top:974.93px;font:normal 400 28.78px/0 'Liberation Sans',sans-serif;color:#000;transform:scaleX(0.9400);">14</div>
</body></html>
